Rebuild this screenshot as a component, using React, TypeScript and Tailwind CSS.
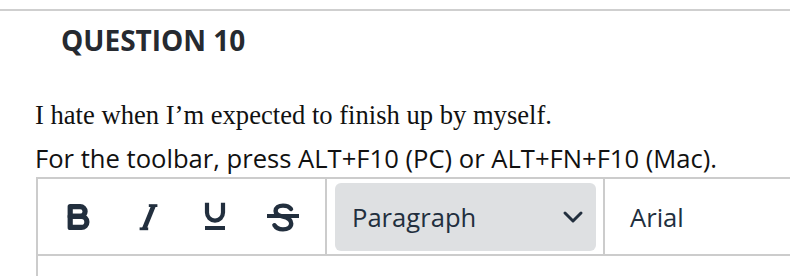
import React from "react";

const sans = { fontFamily: '"Open Sans", "Noto Sans", sans-serif' };

function BoldIcon() {
  return (
    <svg width="48" height="48" viewBox="0 0 24 24" fill="none" stroke="#222f3e" strokeWidth="2.6" strokeLinejoin="round">
      <path d="M7.6 6.8 H12.6 A2.45 2.45 0 0 1 12.6 11.7 H7.6 Z" />
      <path d="M7.6 11.7 H13.2 A2.75 2.75 0 0 1 13.2 17.2 H7.6 Z" />
    </svg>
  );
}
function ItalicIcon() {
  return (
    <svg width="48" height="48" viewBox="0 0 24 24" fill="none" stroke="#222f3e" strokeLinecap="butt">
      <path d="M12.9 6.3 H17.2" strokeWidth="1.4" />
      <path d="M8.3 17.9 H12.6" strokeWidth="1.4" />
      <path d="M15.3 6.3 L10.6 17.9" strokeWidth="2.3" />
    </svg>
  );
}
function UnderlineIcon() {
  return (
    <svg width="48" height="48" viewBox="0 0 24 24" fill="none" stroke="#222f3e">
      <path d="M8 4.9 V9.8 A4 4 0 0 0 16 9.8 V4.9" strokeWidth="2.1" />
      <path d="M7 17.5 H17" strokeWidth="2" />
    </svg>
  );
}
function StrikeIcon() {
  return (
    <svg width="48" height="48" viewBox="0 0 24 24" fill="none" stroke="#222f3e" strokeLinecap="round">
      <path d="M16 8 C15 6.6 13.6 6.3 12 6.3 C9.8 6.3 8.3 7.4 8.3 9 C8.3 10.8 10 11.4 12 11.8 C14.3 12.3 16.1 13.2 16.1 15.3 C16.1 17.3 14.3 18.2 12 18.2 C10 18.2 8.5 17.5 7.7 16.1" strokeWidth="2.2" />
      <path d="M4 11.5 H20" strokeWidth="2" strokeLinecap="butt" />
    </svg>
  );
}

export default function App() {
  return (
    <div className="w-[790px] h-[276px] bg-white overflow-hidden">
      <div className="mt-[9px] h-[2px] bg-[#cfcfcf]" />
      <div
        className="mt-[15px] pl-[61px] text-[28px] leading-[28px] font-bold text-[#262a30]"
        style={sans}
      >
        QUESTION 10
      </div>
      <div
        className="mt-[48px] pl-[35px] text-[26.6px] leading-[26.6px] text-[#111]"
        style={{ fontFamily: '"Liberation Serif", "Times New Roman", serif' }}
      >
        I hate when I’m expected to finish up by myself.
      </div>
      <div
        className="mt-[17px] pl-[35px] text-[25.6px] leading-[25.6px] text-[#111]"
        style={sans}
      >
        For the toolbar, press ALT+F10 (PC) or ALT+FN+F10 (Mac).
      </div>
      <div className="mt-[6px] ml-[36px] border-l-2 border-t-2 border-[#cccccc] h-[200px]">
        <div className="flex items-center h-[77px] border-b-2 border-[#cccccc]" style={sans}>
          <div className="flex items-center h-full pl-[11px] pr-[12px] gap-[8px] border-r-2 border-[#cccccc]">
            <div className="w-[60px] h-[68px] flex items-center justify-center"><BoldIcon /></div>
            <div className="w-[60px] h-[68px] flex items-center justify-center"><ItalicIcon /></div>
            <div className="w-[60px] h-[68px] flex items-center justify-center"><UnderlineIcon /></div>
            <div className="w-[60px] h-[68px] flex items-center justify-center"><StrikeIcon /></div>
          </div>
          <div className="flex items-center h-full pl-[8px] pr-[7px] border-r-2 border-[#cccccc]">
            <div className="flex items-center justify-between w-[261px] h-[68px] rounded-[6px] bg-[#dee0e2] pl-[17px] pr-[12px] text-[25.6px] text-[#222f3e]">
              <span className="pt-[3px]">Paragraph</span>
              <svg width="22" height="14" viewBox="0 0 22 14" fill="none" stroke="#222f3e" strokeWidth="3" strokeLinecap="round" strokeLinejoin="round">
                <path d="M3 3 L11 11 L19 3" />
              </svg>
            </div>
          </div>
          <div className="pl-[25px] pt-[3px] text-[25.6px] text-[#222f3e]">Arial</div>
        </div>
      </div>
    </div>
  );
}
